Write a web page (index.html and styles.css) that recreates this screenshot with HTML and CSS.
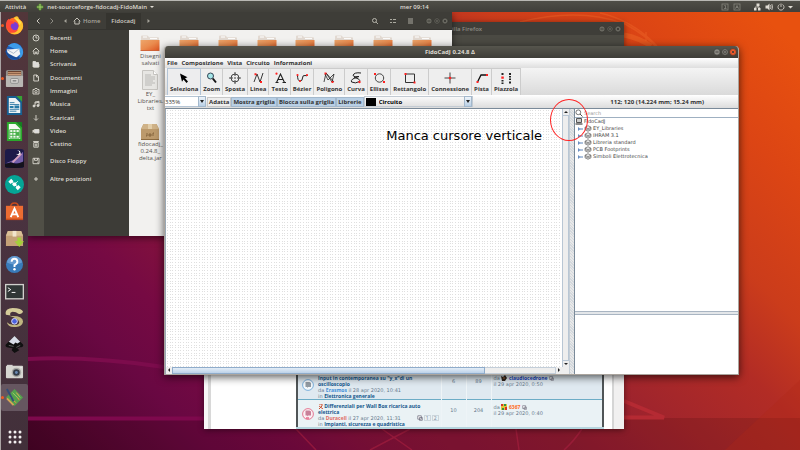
FILE: index.html
```html
<!DOCTYPE html>
<html lang="it">
<head>
<meta charset="utf-8">
<title>FidoCadJ 0.24.8 Δ</title>
<link rel="stylesheet" href="styles.css">
</head>
<body>
<svg width="0" height="0" class="defs" aria-hidden="true">
  <defs>
    <linearGradient id="folderFill" x1="0" y1="0" x2="1" y2="1"><stop offset="0" stop-color="#eda66c"/><stop offset=".5" stop-color="#ea8b4e"/><stop offset="1" stop-color="#dd5421"/></linearGradient>
    <symbol id="folder" viewBox="0 0 20 16"><path d="M1 1.500q0-1 1-1h5q1 0 1.500 1l.5.8h9q1 0 1 1V6H1z" fill="#e2d9d1"/><path d="M3 2h4M10 3.600h7" stroke="#fff" stroke-width="1"/><path d="M.5 5h19v9.500q0 1-1 1h-17q-1 0-1-1z" fill="url(#folderFill)"/><path d="M.5 15.500h19" stroke="#c94f20" stroke-width=".8"/></symbol>
    <symbol id="winbtns" viewBox="0 0 24 8"><g fill="#6a6961" stroke="#33322e" stroke-width=".6"><circle cx="4" cy="4" r="3"/><circle cx="12" cy="4" r="3"/><circle cx="20" cy="4" r="3"/></g><path d="M2.500 4h3M10.700 2.700h2.600v2.600h-2.600zM18.800 2.800l2.400 2.400m0-2.400l-2.400 2.400" stroke="#33322e" stroke-width=".8" fill="none"/></symbol>
    <symbol id="lib" viewBox="0 0 8 7"><path d="M1 2.200L4 .7l3 1.500-3 1.500zM1 3.500L4 5l3-1.500M1 4.800l3 1.500 3-1.500M1 2.200v2.600M7 2.200v2.600" fill="#eee" stroke="#666" stroke-width=".7"/></symbol>
    <symbol id="node" viewBox="0 0 6 6"><path d="M1 1v4l2.500-2z" fill="#6b8fc2"/><path d="M3 3h3" stroke="#5d84bb"/></symbol>
    <symbol id="goto" viewBox="0 0 6 6"><path d="M.8.8h3.500v3.400H.8zM2.500 2.500h2.800v2.800H2.500z" fill="#fff" stroke="#667" stroke-width=".7"/></symbol>
  </defs>
</svg>
<main class="desktop">
  <svg class="wallpaper" viewBox="0 0 800 450" preserveAspectRatio="none" aria-hidden="true">
    <rect y="418" width="800" height="32" fill="#200" opacity=".14"/>
    <path d="M28 359Q90 356 164 367" fill="none" stroke="#7c0c4c" stroke-width="4"/>
    <path d="M28 418.500H204" stroke="#7e094d" stroke-width="4"/>
    <path d="M624 401L664 417.500H624" fill="none" stroke="#b52a33" stroke-width="4"/>
    <path d="M296 429l20 21M370 450l40-21M382 429l30 21M516 429l3 21M582 429q-8 12-18 21" fill="none" stroke="#a82040" stroke-width="1.500" opacity=".6"/>
    <path d="M520 22q60-15 105 2q22 12 32 24M600 13q32 7 57 33M646 32v9" fill="none" stroke="#f06a2a" stroke-width="1.500" opacity=".4"/>
    <path d="M624 35q15 3 27 11" fill="none" stroke="#f0702a" stroke-width="5" opacity=".4"/>
    <path d="M800 380L725 450h75z" fill="#b02818" opacity=".3"/>
  </svg>

  <header class="topbar">
    <button class="plain">Attività</button>
    <button class="plain appmenu"><svg width="8" height="8" viewBox="0 0 8 8" aria-hidden="true"><path d="M4 0l2 2 2 2-2 2-2 2-2-2-2-2 2-2z" fill="#4c7a31"/><path d="M4 1v6M1 4h6" stroke="#a9d36f"/></svg>net-sourceforge-fidocadj-FidoMain <span class="caret"></span></button>
    <time class="clock">mer 09:14</time>
    <svg class="tray" width="74" height="10" viewBox="0 0 74 10" aria-label="Stato del sistema"><g fill="none" stroke="#85847c" stroke-width=".8"><rect x="1" y="2" width="6" height="6"/><rect x="13" y="2" width="6" height="6"/><path d="M3.300 3.500h1.200v3M3 6.500h2.500M14.500 6.700l1.500-3.200 1.500 3.200M15 5.500h2"/></g><g fill="#dfdbd2"><rect x="35.500" y="1.500" width="3" height="2.500"/><rect x="33" y="6" width="2.500" height="2.500"/><rect x="37" y="6" width="2.500" height="2.500"/><path d="M44.500 3.500h2l2-2v7l-2-2h-2zM67 4h5l-2.500 2.500z"/></g><path d="M37 3.500v1.500M34.200 6.500v-1.500h4v1.500M49.500 3q1 2 0 4M50.800 2q1.500 3 0 6M58.500 2.500a3 3 0 1 0 3 0M60 1.500v3.500" fill="none" stroke="#dfdbd2" stroke-width=".8"/></svg>
  </header>

  <nav class="dock" aria-label="Applicazioni">
    <div class="dock-list">
      <button class="running" aria-label="Firefox"><svg viewBox="0 0 20 20"><circle cx="10" cy="10.500" r="9" fill="#ff6a26"/><path d="M9 2q3-3 5-1 0 2 4 5 3 7-2 11-5 4-10 1l7-4 3-6z" fill="#ffc22f"/><circle cx="9.500" cy="11" r="4.600" fill="#7a3bd4"/><path d="M2 5l2-2 1 2q5 0 5 3-4-1-4 3 2 6 8 3-3 5-8 3-7-4-4-12z" fill="#ff4a37"/><path d="M10 2q4 4 5 8l2-3q-1-4-7-5z" fill="#ffe14d"/></svg></button>
      <button aria-label="Thunderbird"><svg viewBox="0 0 20 20"><circle cx="10" cy="10" r="9" fill="#1e5eb8"/><path d="M3 4q7-6 13 0 5 5 2 11l-3 3 1-8z" fill="#3d9be8"/><path d="M2 8l13-1 1 6-5 4-8-3z" fill="#f2f3f5"/><path d="M2 8l7 4 6-5" fill="none" stroke="#a9b6c9"/><path d="M0 9q2 8 9 9 5 1 8-2-4 1-8-1Q4 13 0 9z" fill="#184a96"/></svg></button>
      <button class="running" aria-label="File"><svg viewBox="0 0 20 20"><rect x="1" y="1" width="18" height="18" rx="2" fill="#93918c"/><path d="M3 2h14v5H3z" fill="#6b4330"/><path d="M3 4h14M3 6h14" stroke="#e9b48b"/><rect x="1" y="7" width="18" height="12" rx="1" fill="#b9b7b3"/><rect x="6" y="10" width="8" height="5" rx="1" fill="#d8d6d2" stroke="#777" stroke-width=".7"/><path d="M8 12.500h4" stroke="#555"/></svg></button>
      <button aria-label="LibreOffice Writer"><svg viewBox="0 0 20 20"><path d="M2 0h10l6 5v15H2z" fill="#185f91"/><path d="M12 0h6v6z" fill="#36a135"/><path d="M4 2h7l5 5v11H4z" fill="#eef3f5"/><path d="M5 7h5M5 9h10M5 14h10M5 16h7" stroke="#337ba6"/><path d="M5 10.500h4v2H5zM10 10h5v3h-5z" fill="#267aa7"/></svg></button>
      <button aria-label="LibreOffice Calc"><svg viewBox="0 0 20 20"><path d="M2 0h10l6 5v15H2z" fill="#2aa82c"/><path d="M12 0h6v6z" fill="#167c21"/><path d="M4 2h7l5 5v11H4z" fill="#f4fbf2"/><path d="M5 8h10v9H5zM5 11h10M5 14h10M8.300 8v9M11.600 8v9" fill="none" stroke="#48b04a"/><path d="M11.600 11H15v3h-3.400z" fill="#48b04a"/></svg></button>
      <button aria-label="Stellarium"><svg viewBox="0 0 20 20"><rect x="0" y="0" width="20" height="20" rx="3" fill="#1d1a49"/><path d="M1 15Q11 12 19 3v12z" fill="#735ea8"/><path d="M8 14l9-9" stroke="#d4a0bd" stroke-width="2"/><circle cx="14" cy="4" r="2.300" fill="#fff"/><circle cx="13" cy="3.500" r="2" fill="#1d1a49"/><path d="M0 16l6-2 6 2 8-3v6q-9 2-20 0z" fill="#14121c"/></svg></button>
      <button aria-label="Satellite"><svg viewBox="0 0 20 20"><circle cx="10" cy="10" r="10" fill="#05a596"/><path d="M3.500 7l3-3 2.500 2.500-3 3zM11 13.500l3-3 2.500 2.500-3 3zM8.500 8l3 0 1 3-3 1-2-2z" fill="#fff"/><path d="M7 7l6 6M11.500 8.500l2-2" stroke="#fff" stroke-width=".8"/></svg></button>
      <button aria-label="Ubuntu Software"><svg viewBox="0 0 20 20"><path d="M6 5q0-4 4-4t4 4" fill="none" stroke="#c94b1d" stroke-width="1.500"/><path d="M1 4h18v15H1z" fill="#ed6c32"/><path d="M1 17.500h18V19H1z" fill="#c64b1c"/><path d="M6 16l4-9 4 9M7 13h6" fill="none" stroke="#fff" stroke-width="2"/></svg></button>
      <button aria-label="Gestore pacchetti"><svg viewBox="0 0 20 20"><path d="M3 2h14l2 5v11H1V7z" fill="#c4a177"/><path d="M3 2h14l2 5H1z" fill="#dac096"/><path d="M8 2h4v6H8z" fill="#f1e4cc"/><path d="M13 9h4v4h3l-5 6-5-6h3z" fill="#a3d039"/></svg></button>
      <button aria-label="Aiuto"><svg viewBox="0 0 20 20"><circle cx="10" cy="10" r="9" fill="#397bb9"/><path d="M2 8a8 7 0 0 1 16 0q-8 4-16 0z" fill="#659bd0"/><path d="M7 7q0-3 3-3t3 3q0 2-3 3.500v2" fill="none" stroke="#fff" stroke-width="2"/><circle cx="10" cy="15" r="1.300" fill="#fff"/></svg></button>
      <button aria-label="Terminale"><svg viewBox="0 0 20 20"><rect x=".7" y="2.700" width="18.600" height="15" fill="#303736" stroke="#d0d0cc" stroke-width="1.400"/><path d="M3 6l3 2-3 2M7 11h4" fill="none" stroke="#fff"/></svg></button>
      <button aria-label="Scidavis"><svg viewBox="0 0 20 20"><path d="M1 7Q-1 1 8 0q10 0 11 4-1 3-5 2-2-2-6-2-4 1-2 4z" fill="#d4cb99"/><path d="M5 8.500q14-1 14 6-1 6-10 5.500-6 0-7-5 3 3 7 3 6 0 6-3-1-4-10-6.500z" fill="#c0b681"/><circle cx="10" cy="14" r="3" fill="#4b60df" stroke="#e1e4ff"/></svg></button>
      <button aria-label="Inkscape"><svg viewBox="0 0 20 20"><path d="M10 1l9 9q1 3-3 3l-3 1 2 2-5 3-3-3 1-2-6-1q-3-2 0-4z" fill="#101010"/><path d="M10 1l6 6-3 2-2-1-2 2-5-3z" fill="#d9dee8"/><path d="M4 11l5 1M12 13l4-2" stroke="#777" stroke-width=".8"/></svg></button>
      <button aria-label="Fotocamera"><svg viewBox="0 0 20 20"><rect x="1" y="4" width="18" height="13" rx="1" fill="#d6d6d1"/><path d="M2 4h6V3H2z" fill="#f1f1ed"/><circle cx="12" cy="11" r="5" fill="#a9aaa6"/><circle cx="12" cy="11" r="3.500" fill="#333c49"/><circle cx="12" cy="11" r="1.500" fill="#6a89b3"/><path d="M16 6h2" stroke="#eee"/></svg></button>
      <button class="running active" aria-label="FidoCadJ"><svg viewBox="0 0 20 20"><path d="M10 1l9 9-9 9-9-9z" fill="#54a04d"/><path d="M8 5l7 7M12 5l4 5M6 10l5 5" stroke="#a6cf68"/><path d="M12 5l3 3M8 12l4 4M13 10l2 3" stroke="#d98543"/><path d="M2 1l7 13" stroke="#334d78" stroke-width="2"/><path d="M2 11l7 7" stroke="#d5a557" stroke-width="2"/></svg></button>
    </div>
    <button class="apps" aria-label="Mostra applicazioni"><svg viewBox="0 0 14 14"><g fill="#f3eff0"><circle cx="2" cy="2" r="1.500"/><circle cx="7" cy="2" r="1.500"/><circle cx="12" cy="2" r="1.500"/><circle cx="2" cy="7" r="1.500"/><circle cx="7" cy="7" r="1.500"/><circle cx="12" cy="7" r="1.500"/><circle cx="2" cy="12" r="1.500"/><circle cx="7" cy="12" r="1.500"/><circle cx="12" cy="12" r="1.500"/></g></svg></button>
  </nav>

  <section class="window firefox" aria-label="Mozilla Firefox">
    <header class="ff-title"><span>Mozilla Firefox</span><svg width="24" height="8" aria-hidden="true"><use href="#winbtns"/></svg></header>
    <div class="ff-page">
      <div class="ff-margin"></div>
      <table class="topics">
        <tbody>
          <tr>
            <td class="mark"><svg width="12" height="12" viewBox="0 0 12 12" aria-hidden="true"><circle cx="6" cy="6" r="5.400" fill="#f4f8fb" stroke="#5fa0d5" stroke-width=".8"/><path d="M3.500 3h4l1.500 1v4H6L5 9V8H3.500z" fill="#929ba3"/></svg></td>
            <td class="topic"><a href="#" class="subject">Input in contemporanea su "y_x"di un oscilloscopio</a><p>da <a href="#" class="u-blue">Erasmos</a> il 28 apr 2020, 10:41</p><p>in <a href="#">Elettronica generale</a></p></td>
            <td class="num"><span>6</span></td><td class="num"><span>89</span></td>
            <td class="last"><p>da <svg width="6" height="6" viewBox="0 0 6 6"><path d="M0 1l2 1 2-2 2 3-2 3H1z" fill="#30251d"/><path d="M3 2v2" stroke="#b46b3d"/></svg> <a href="#" class="u-navy">claudiocedrone</a> <svg width="5" height="5"><use href="#goto"/></svg></p><p>il 29 apr 2020, 0:50</p></td>
          </tr>
          <tr>
            <td class="mark"><svg width="12" height="12" viewBox="0 0 12 12" aria-hidden="true"><circle cx="6" cy="6" r="5.400" fill="#fbeff3" stroke="#df5a7b" stroke-width=".8"/><path d="M3.500 2.500h4l1.500 1v4H6L5 8.500v-1H3.500z" fill="#c88099"/><path d="M4 10h3" stroke="#e0305f"/></svg></td>
            <td class="topic"><a href="#" class="subject"><svg width="5" height="5" viewBox="0 0 5 5"><path d="M1 0h3v2L1 5M1 2l4 3" fill="none" stroke="#cc5130" stroke-width="1"/></svg> Differenziali per Wall Box ricarica auto elettrica</a><p>da <a href="#" class="u-red">Duracell</a> il 27 apr 2020, 11:31<span class="pages"><svg width="6" height="6"><use href="#goto"/></svg><a href="#">1</a><a href="#">2</a></span></p><p>in <a href="#">Impianti, sicurezza e quadristica</a></p></td>
            <td class="num"><span>10</span></td><td class="num"><span>204</span></td>
            <td class="last"><p>da <svg width="6" height="6" viewBox="0 0 6 6"><path d="M0 0h6v6H0z" fill="#e4c438"/><path d="M0 0h2v2H0zM4 3h2v3H4z" fill="#d4342a"/><path d="M3 0h2v2H3zM1 4h2v2H1z" fill="#329342"/></svg> <a href="#" class="u-orange">6367</a> <svg width="5" height="5"><use href="#goto"/></svg></p><p>il 29 apr 2020, 0:40</p></td>
          </tr>
        </tbody>
      </table>
      <div class="ff-scroll"></div>
    </div>
  </section>

  <section class="window files" aria-label="Fidocadj">
    <header class="files-head">
      <button class="plain" aria-label="Indietro"><svg width="6" height="8" viewBox="0 0 6 8"><path d="M4.500 1.500L2 4l2.500 2.500" fill="none" stroke="#cfccc3"/></svg></button>
      <button class="plain" aria-label="Avanti"><svg width="6" height="8" viewBox="0 0 6 8"><path d="M1.500 1.500L4 4 1.500 6.500" fill="none" stroke="#8d8b83"/></svg></button>
      <div class="path">
        <svg width="4" height="6" viewBox="0 0 4 6" aria-hidden="true"><path d="M3.500 1v4L1 3z" fill="#a5a39a"/></svg>
        <a href="#" class="home"><svg width="8" height="8" viewBox="0 0 8 8" aria-hidden="true"><path d="M.7 4.300L4 1l3.300 3.300M1.800 4v3h4.400V4" fill="none" stroke="#c4c1b8"/></svg>Home</a>
        <a href="#" class="here">Fidocadj</a>
        <svg width="4" height="6" viewBox="0 0 4 6" aria-hidden="true"><path d="M.5 1v4L3 3z" fill="#a5a39a"/></svg>
      </div>
      <svg class="files-tools" width="44" height="8" viewBox="0 0 44 8" aria-hidden="true"><g fill="none" stroke="#b7b5ac"><circle cx="3.500" cy="3.500" r="2"/><path d="M5 5l2 2M19 2.500h2M22 2.500h3M19 5.500h2M22 5.500h3M37 2h5M37 4h5M37 6h5" stroke-width=".9"/></g></svg>
      <svg width="24" height="8" aria-hidden="true"><use href="#winbtns"/></svg>
    </header>
    <div class="files-body">
      <nav class="places" aria-label="Risorse">
        <div class="place-group">
          <a href="#"><svg viewBox="0 0 8 8"><circle cx="4" cy="4" r="3"/><path d="M4 2v2h1.500"/></svg>Recenti</a>
          <a href="#"><svg viewBox="0 0 8 8"><path d="M.7 4.300L4 1l3.300 3.300M1.800 4v3h1.500V5h1.400v2h1.500V4"/></svg>Home</a>
          <a href="#"><svg viewBox="0 0 8 8"><path d="M1 1.500h2.500l.7 1H6.500v4.500H1zM2 4h5v3H2z" fill="#ddd"/></svg>Scrivania</a>
          <a href="#"><svg viewBox="0 0 8 8"><path d="M1.800 1H5l1.500 1.500V7H1.800zM4.500 1v2h2"/></svg>Documenti</a>
          <a href="#"><svg viewBox="0 0 8 8"><path d="M1 2.500h1.500L3 1.500h2l.5 1H7V7H1z"/><circle cx="4" cy="4.700" r="1.200"/></svg>Immagini</a>
          <a href="#"><svg viewBox="0 0 8 8"><path d="M3 6V2l4-.7V5.500M3 3l4-.7"/><circle cx="2" cy="6" r="1" fill="#ddd"/><circle cx="6" cy="5.600" r="1" fill="#ddd"/></svg>Musica</a>
          <a href="#"><svg viewBox="0 0 8 8"><path d="M4 1v5M2 4.500l2 2 2-2"/></svg>Scaricati</a>
          <a href="#"><svg viewBox="0 0 8 8"><path d="M2.500 2.500H7v3.500H2.500zM2.500 4L1 3v2.500z" fill="#ddd"/></svg>Video</a>
          <a href="#"><svg viewBox="0 0 8 8"><path d="M1.800 2.500h4.400V7.200H1.800zM1.200 1.500h5.600M3.300 3.500v3M4.700 3.500v3"/></svg>Cestino</a>
        </div>
        <div class="place-group wide">
          <a href="#"><svg viewBox="0 0 8 8"><path d="M1 1.300h6v5.400H1zM2.500 1.300v2h3v-2M5.300 5.300h1"/></svg>Disco Floppy</a>
          <a href="#"><svg viewBox="0 0 8 8"><path d="M4 2v4M2 4h4"/></svg>Altre posizioni</a>
        </div>
      </nav>
      <div class="icons">
        <figure><svg width="20" height="16"><use href="#folder"/></svg><figcaption>Disegni salvati</figcaption></figure>
        <figure><svg width="20" height="16"><use href="#folder"/></svg></figure>
        <figure><svg width="20" height="16"><use href="#folder"/></svg></figure>
        <figure><svg width="20" height="16"><use href="#folder"/></svg></figure>
        <figure><svg width="20" height="16"><use href="#folder"/></svg></figure>
        <figure><svg width="20" height="16"><use href="#folder"/></svg></figure>
        <figure><svg width="20" height="16"><use href="#folder"/></svg></figure>
        <figure><svg width="20" height="16"><use href="#folder"/></svg></figure>
        <figure class="tall"><svg width="16" height="20" viewBox="0 0 16 20"><path d="M.5.500h11l4 4v15H.5z" fill="#e7e6e3" stroke="#c6c4c0"/><path d="M11.500.500v4h4" fill="#fff" stroke="#c6c4c0"/><path d="M3 5h6M3 7h10M3 9h10M3 11h8M3 13h10M3 15h7" stroke="#b9b8b5"/></svg><figcaption>EY_<br>Libraries.<br>txt</figcaption></figure>
        <figure class="first"><svg width="18" height="18" viewBox="0 0 18 18"><path d="M2.500 1h13L18 6v11H0V6z" fill="#bc9a6c"/><path d="M2.500 1h13L18 6H0z" fill="#cfb287"/><path d="M7 1h4v5H7z" fill="#e2cda8"/><path d="M0 16.500h18" stroke="#8d6c41"/><path d="M6 10v3H5M8 13v-2h2v2zM12 13v-3h1" fill="none" stroke="#70512b" stroke-width=".7"/></svg><figcaption>fidocadj_<br>0.24.8_<br>delta.jar</figcaption></figure>
      </div>
    </div>
  </section>

  <section class="window cad" aria-label="FidoCadJ">
    <header class="cad-title"><h1>FidoCadJ 0.24.8 Δ</h1><svg width="24" height="8" viewBox="0 0 24 8" aria-hidden="true"><g fill="#8a8982" stroke="#33322e" stroke-width=".6"><circle cx="4" cy="4" r="3.200"/><circle cx="12" cy="4" r="3.200"/><circle cx="20" cy="4" r="3.400" fill="#f0592a"/></g><path d="M2.500 4h3M10.700 2.700h2.600v2.600h-2.600zM18.800 2.800l2.400 2.400m0-2.400l-2.400 2.400" stroke="#3c3b37" stroke-width=".8" fill="none"/></svg></header>
    <nav class="menubar" aria-label="Menu"><button>File</button><button>Composizione</button><button>Vista</button><button>Circuito</button><button>Informazioni</button></nav>
    <div class="tools" role="toolbar" aria-label="Strumenti">
      <button class="on"><svg viewBox="0 0 12 12"><path d="M2 1.500l7.500 3.700L7 6.200l3 3.300L8.500 11l-3-3.500L4 9.700z" fill="#000"/></svg>Seleziona</button>
      <button><svg viewBox="0 0 12 12"><circle cx="4.500" cy="4" r="3" fill="#a5e6e8" stroke="#345" stroke-width="1"/><path d="M6.800 6.500L10 10.500" stroke="#111" stroke-width="2"/></svg>Zoom</button>
      <button><svg viewBox="0 0 12 12"><circle cx="6" cy="6" r="4" fill="none" stroke="#333" stroke-width=".9"/><path d="M6 0v4M6 8v4M0 6h4M8 6h4" stroke="#333" stroke-width=".9"/><circle cx="6" cy="6" r=".7"/></svg>Sposta</button>
      <button><svg viewBox="0 0 12 12"><path d="M2 10L5 2l3 8 3-9" fill="none" stroke="#222" stroke-width=".9"/><path d="M2.500 1.200h2v2h-2zM8 9h2v2H8z" fill="#f22"/></svg>Linea</button>
      <button><svg viewBox="0 0 12 12"><path d="M2.500 10.500L6.500 2l4 8.500M4 7.500h5M1.500 10.500h3M8.500 10.500H12" fill="none" stroke="#222" stroke-width="1.100"/><circle cx="2.500" cy="1.700" r="1.100" fill="#f22"/></svg>Testo</button>
      <button><svg viewBox="0 0 12 12"><path d="M1.500 3q0 6 2.500 6T6.500 6 9 3.500t2.500 0" fill="none" stroke="#222"/><circle cx="1.500" cy="3" r="1.100" fill="#f22"/><circle cx="4" cy="9" r="1.100" fill="#f22"/><circle cx="11" cy="3" r="1.100" fill="#f22"/></svg>Bézier</button>
      <button><svg viewBox="0 0 12 12"><path d="M1 10l2-9 6 9 2-8-6 6-3-6M3 1l8 9" fill="none" stroke="#222" stroke-width=".8"/><path d="M1.500.5h2v2h-2zM8.500 9h2v2h-2z" fill="#f22"/></svg>Poligono</button>
      <button><svg viewBox="0 0 12 12"><path d="M11 1Q4 0 3 3.500q1 2 6 1Q0 7 1.500 10q4 2 8-.5Q11 7 4 5.500" fill="none" stroke="#222"/><circle cx="9.500" cy="10" r="1.200" fill="#f22"/></svg>Curva</button>
      <button><svg viewBox="0 0 12 12"><circle cx="6.500" cy="6" r="4.200" fill="none" stroke="#333" stroke-width=".9"/><path d="M1 1h2v2H1zM10 9h2v2h-2z" fill="#f22"/></svg>Ellisse</button>
      <button><svg viewBox="0 0 12 12"><path d="M1.500 2h9v8.500h-9z" fill="none" stroke="#333"/><path d="M.5 1h2v2h-2zM9.500 9.500h2v2h-2z" fill="#f22"/></svg>Rettangolo</button>
      <button><svg viewBox="0 0 12 12"><path d="M6 .5v11M.5 6h11" stroke="#333" stroke-width=".9"/><circle cx="6" cy="6" r="1.300" fill="#f22"/></svg>Connessione</button>
      <button><svg viewBox="0 0 12 12"><path d="M1.500 10l3.500-7h6" fill="none" stroke="#111" stroke-width="1.300"/><path d="M.5 9h2v2h-2zM10 2h2v2h-2z" fill="#f22"/></svg>Pista</button>
      <button><svg viewBox="0 0 12 12"><path d="M1.500 1h2v2h-2zM1.500 8h2v1.500h-2zM1.500 10.500h2V12h-2zM9 1h2v2H9zM9 4h2v1.500H9zM9 6.500h2V8H9zM9 9.500h2v2H9z" fill="#222"/><path d="M1.300 4.500h2.500v2.300H1.300z" fill="#f22"/></svg>Piazzola</button>
    </div>
    <div class="options">
      <label class="combo zoomsel"><select aria-label="Zoom"><option>335%</option></select><i></i></label>
      <button>Adatta</button><button class="sel">Mostra griglia</button><button class="sel">Blocca sulla griglia</button><button class="sel">Librerie</button>
      <label class="combo layer"><b class="swatch"></b><select aria-label="Layer"><option>Circuito</option></select><i></i></label>
      <output>112; 120 (14.224 mm; 15.24 mm)</output>
    </div>
    <div class="workspace">
      <div class="drawing">
        <div class="sheet">
          <svg class="grid" aria-hidden="true"><defs><pattern id="dots" width="8" height="8" patternUnits="userSpaceOnUse"><path d="M1 1h1v1H1zM4 1h1v1H4zM6 1h1v1H6zM1 4h1v1H1zM4 4h1v1H4zM6 4h1v1H6zM1 6h1v1H1zM4 6h1v1H4zM6 6h1v1H6z" fill="#dfdfdf"/></pattern></defs><rect width="100%" height="100%" fill="url(#dots)"/></svg>
          <p>Manca cursore verticale</p>
        </div>
        <div class="vbar"><svg viewBox="0 0 6 6"><path d="M1 4h4L3 2z"/></svg><span></span><svg viewBox="0 0 6 6"><path d="M1 2h4L3 4z"/></svg></div>
        <div class="hbar"><svg viewBox="0 0 6 6"><path d="M4 1v4L2 3z"/></svg><span></span><em></em><svg viewBox="0 0 6 6"><path d="M2 1v4l2-2z"/></svg></div>
      </div>
      <div class="split"></div>
      <aside class="library">
        <label class="search"><svg width="8" height="8" viewBox="0 0 8 8" aria-hidden="true"><circle cx="3.300" cy="3.300" r="2.400" fill="none" stroke="#555" stroke-width=".8"/><path d="M5 5l2.500 2.500" stroke="#555"/></svg><input type="text" placeholder="Search" aria-label="Search"></label>
        <ul class="tree">
          <li class="root"><svg width="8" height="7" viewBox="0 0 8 7"><path d="M1.500.5h5v4h-5z" fill="#ccc" stroke="#555"/><path d="M.5 6h7" stroke="#666" stroke-width="1.500"/></svg>FidoCadJ</li>
          <li><svg width="6" height="6"><use href="#node"/></svg><svg width="8" height="7"><use href="#lib"/></svg>EY_Libraries</li>
          <li><svg width="6" height="6"><use href="#node"/></svg><svg width="8" height="7"><use href="#lib"/></svg>IHRAM 3.1</li>
          <li><svg width="6" height="6"><use href="#node"/></svg><svg width="8" height="7"><use href="#lib"/></svg>Libreria standard</li>
          <li><svg width="6" height="6"><use href="#node"/></svg><svg width="8" height="7"><use href="#lib"/></svg>PCB Footprints</li>
          <li><svg width="6" height="6"><use href="#node"/></svg><svg width="8" height="7"><use href="#lib"/></svg>Simboli Elettrotecnica</li>
        </ul>
        <div class="hsplit"></div>
        <div class="preview"></div>
      </aside>
    </div>
  </section>
  <div class="callout"></div>
</main>
</body>
</html>
```
FILE: styles.css
```css
* { box-sizing: border-box; margin: 0; padding: 0; }
body { font-family: "Open Sans", "Noto Sans", sans-serif; font-size: 6px; }
a { color: inherit; text-decoration: none; }
button, input, select { font: inherit; color: inherit; border: 0; background: none; }
svg { flex: none; }
.defs { position: absolute; }

.desktop {
  position: relative; height: 100vh; overflow: hidden;
  background: linear-gradient(45deg, #3d0325, #450428 3%, #690842 17%, #760a43 24%, #82113d 30%, #8f1b33 46%, #a3262b 57%, #b22c25 66%, #cb3c1b 74%, #dc4514 85%, #e8510f 96%);
}
.wallpaper { position: absolute; width: 100%; height: 100%; }

/* Top panel */
.topbar {
  position: absolute; inset: 0 0 auto; z-index: 6; height: 12px;
  display: flex; align-items: center; padding: 0 5px; gap: 10px;
  border-top: 1px solid #b9b8b3; background: linear-gradient(#4f4e47, #403f3a);
  color: #dfdbd2; font-weight: 600; line-height: 8px;
}
.plain { display: flex; align-items: center; gap: 3px; font-weight: inherit; }
.caret { border: 2px solid transparent; border-top-color: #dfdbd2; margin-top: 2px; }
.clock { position: absolute; left: 50%; }
.tray { margin-left: auto; }

/* Launcher */
.dock {
  position: absolute; top: 12px; bottom: 0; left: 0; width: 28px; z-index: 5;
  display: flex; flex-direction: column; border-left: 1px solid #aaa4a4;
  background: linear-gradient(#52363a, #4b3340 40%, #42303a);
}
.dock-list { flex: 1; display: flex; flex-direction: column; }
.dock-list button { flex: 1; min-height: 0; position: relative; display: grid; place-items: center; }
.dock-list svg { width: 19px; height: 19px; }
.dock-list .active { background: #665660; border-radius: 2px; }
.running::before {
  content: ""; position: absolute; left: 0; top: 12px; width: 3px; height: 3px;
  border-radius: 50%; background: #ee5a24;
}
.apps { height: 39px; display: grid; place-items: center; padding-top: 13px; }
.apps svg { width: 14px; height: 14px; }

.window { position: absolute; display: flex; flex-direction: column; }

/* Browser */
.firefox { left: 204px; top: 22px; width: 420px; height: 407px; background: #4b4a43; box-shadow: 0 1px 6px #0007; }
.ff-title {
  height: 13px; display: flex; justify-content: space-between; align-items: center;
  padding: 0 2px 0 236px; background: #3f3e39; color: #8d8b83; font-weight: 600;
  border-radius: 3px 3px 0 0;
}
.ff-page { flex: 1; margin-top: 13px; display: flex; align-items: flex-end; background: #fff; overflow: hidden; }
.ff-margin { align-self: stretch; width: 92px; border-left: 4px solid #f7f7f7; box-shadow: inset 3px 0 #d8d8d8; }
.topics {
  flex: 1; border-collapse: collapse; table-layout: fixed;
  border: solid #505557; border-width: 0 2px; color: #66798c;
  font: 5px/6px "DejaVu Sans", sans-serif;
}
.topics tr { height: 28px; background: #eaf2f5; border-bottom: 2px solid #b5d5de; }
.topics tr:first-child { background: #dfe9f0; border-bottom: 1px solid #6cacc6; }
.topics td { vertical-align: top; padding: 3px 1px 0; border-right: 1px solid #eef4f7; }
.topics tr:first-child .topic { padding-top: 4px; }
.topics a { color: #14578c; font-weight: 700; font-family: "Open Sans", sans-serif; }
.topics .subject { display: block; padding-right: 14px; }
.topics .mark { width: 19px; padding: 8px 3px 0 4px; border-right: 0; }
.topics .num { width: 25px; text-align: center; padding-top: 7px; }
.topics .last { width: 112px; padding: 4px 2px 0; border-right: 0; }
.topics .topic { position: relative; }
.topics .u-blue { color: #3f8fd8; }
.topics .u-red { color: #e06a62; }
.topics .u-navy { color: #1440b8; }
.topics .u-orange { color: #ff6a1a; }
.topics svg { vertical-align: middle; }
.pages { position: absolute; right: 2px; display: inline-flex; gap: 1px; }
.pages a { border: 1px solid #ccd6dc; padding: 0 1px; line-height: 4px; font-weight: 400; color: #77889a; }
.ff-scroll { align-self: stretch; width: 20px; background: linear-gradient(90deg, #fff 8px, #d5d5d5 8px 10px, #f1f0f0 10px); }

/* File manager */
.files { left: 28px; top: 12px; width: 424px; height: 224px; background: #3d3c37; box-shadow: 0 2px 7px #0008; }
.files-head {
  height: 18px; display: flex; align-items: center; gap: 8px; padding: 0 3px 0 7px;
  background: #3e3d38; border-bottom: 1px solid #34332f; color: #a9a79e; font-weight: 600;
}
.path { flex: 1; display: flex; align-items: center; gap: 6px; }
.home { display: flex; align-items: center; gap: 2px; }
.here { padding: 4px 5px 3px; line-height: 9px; color: #cfccc3; background: #35342f; }
.files-tools { margin-right: 2px; }
.files-body { flex: 1; display: flex; }
.places {
  width: 101px; padding-top: 1px; color: #dedbd2; font-weight: 600;
  background: linear-gradient(90deg, #504f46 16px, #3d3c37 16px);
}
.place-group { height: 120px; display: flex; flex-direction: column; }
.place-group.wide { height: 36px; margin-top: 1px; }
.place-group a { flex: 1; display: flex; align-items: center; gap: 10px; padding-left: 4px; line-height: 8px; }
.place-group svg { width: 8px; height: 8px; fill: none; stroke: #dddad1; stroke-width: .9; }
.icons {
  flex: 1; display: grid; grid-template-columns: repeat(8, 1fr); align-content: start;
  padding: 5px 11px 0 2px; background: #f2f1ef; color: #55524d; font-size: 6px; line-height: 7px;
}
.icons figure { display: flex; flex-direction: column; align-items: center; gap: 2px; text-align: center; }
.icons .tall { margin-top: 3px; grid-column: 1; gap: 1px; }
.icons .first { margin-top: 11px; grid-column: 1; gap: 0; }

/* FidoCadJ */
.cad {
  left: 164px; top: 46px; width: 575px; height: 329px; background: #eee;
  border: solid #aaa49d; border-width: 0 1px 1px; border-radius: 4px 4px 0 0;
  box-shadow: 0 2px 8px #000a; color: #333; font-weight: 700; overflow: hidden;
}
.cad-title {
  height: 12px; display: flex; align-items: center; justify-content: flex-end;
  padding-right: 1px; background: linear-gradient(#56554d, #3e3d38); color: #dfdbd2;
}
.cad-title h1 { flex: 1; padding-left: 22px; text-align: center; font-size: 6px; line-height: 8px; }
.menubar { height: 10px; display: flex; gap: 4px; padding: 0 2px; background: linear-gradient(#fff, #dedede); line-height: 8px; }
.tools { height: 27px; display: flex; padding: 0 2px; background: linear-gradient(#f4f4f4, #dadada); }
.tools button {
  display: flex; flex-direction: column; align-items: center; justify-content: space-between;
  padding: 3px 2px 2px; line-height: 8px; background: #eee; border-right: 1px solid #ccc; border-top: 1px solid #ccc;
}
.tools svg { width: 12px; height: 12px; }
.tools .on { border: 1px solid #b3c4d6; border-bottom: 0; background: #ededee; }
.options { height: 13px; display: flex; align-items: center; background: linear-gradient(#fff, #dcdcdc); }
.options button { height: 10px; padding: 0 1px; line-height: 8px; border: 1px solid #c8c8c8; background: #eee; }
.options .sel { background: #b8cfe5; border-color: #a3b8cc; }
.combo { display: flex; align-items: center; height: 11px; }
.combo select { flex: 1; min-width: 0; appearance: none; line-height: 8px; }
.combo i { width: 8px; height: 11px; border: 1px solid #a3b8cc; background: linear-gradient(#eef4fa, #b8cfe5); display: grid; place-items: center; }
.combo i::after { content: ""; border: solid transparent; border-width: 3px 2px 0; border-top-color: #222; }
.zoomsel { width: 41px; margin-right: 1px; background: #fff; font-weight: 400; border: 1px solid #b5c5d5; border-width: 1px 0; }
.layer { width: 109px; border: 1px solid #c3cbd3; padding-left: 1px; gap: 3px; color: #000; }
.swatch { width: 10px; height: 8px; background: #000; }
.options output { margin-left: auto; padding-right: 34px; }
.workspace { flex: 1; min-height: 0; display: flex; border-top: 1px solid #7a8a99; }
.drawing { flex: 1; display: grid; grid-template: 1fr 7px / 1fr 7px; border-left: 1px solid #9aa8b5; }
.sheet { position: relative; background: #fff; }
.grid { position: absolute; inset: 0; width: 100%; height: 100%; }
.sheet p { position: relative; padding: 18px 20px 0 0; text-align: right; color: #000; font: 13px/17px "DejaVu Sans", sans-serif; }
.vbar, .hbar { display: flex; background: #eee; }
.vbar { flex-direction: column; border-left: 1px solid #b8c6d4; }
.vbar span { flex: 1; border: 1px solid #b8c6d4; border-width: 1px 1px 1px 0; }
.vbar svg, .hbar svg { width: 6px; height: 6px; fill: #222; }
.hbar span { flex: 1; border: 1px solid #8faccb; background: linear-gradient(#e3edf7, #bdd2e9); }
.hbar em { width: 71px; border: 1px solid #c3ced9; border-left: 0; }
.split { width: 5px; background: repeating-linear-gradient(45deg, #e8e8e8 0 1px, #d3d8dd 1px 2px); border-left: 1px solid #c5ced6; }
.library { width: 164px; display: flex; flex-direction: column; border-left: 1px solid #7a8a99; background: #fff; font: 5px/7px "DejaVu Sans", sans-serif; color: #444; }
.search { display: flex; align-items: center; height: 9px; border-bottom: 1px solid #9fb0c1; }
.search input { flex: 1; min-width: 0; padding-left: 1px; outline: 0; height: 8px; font-size: 5px; }
.search input::placeholder { color: #999; }
.tree { flex: 1; list-style: none; }
.tree li { display: flex; align-items: center; gap: 1px; padding-left: 2px; }
.tree .root { padding-left: 0; }
.hsplit { height: 4px; border: 1px solid #a9b5c2; border-width: 1px 0; background: #e3e6e9; }
.preview { height: 59px; }

.callout { position: absolute; left: 550px; top: 99px; width: 38px; height: 42px; border: 1px solid #f22; border-radius: 50%; }
```
